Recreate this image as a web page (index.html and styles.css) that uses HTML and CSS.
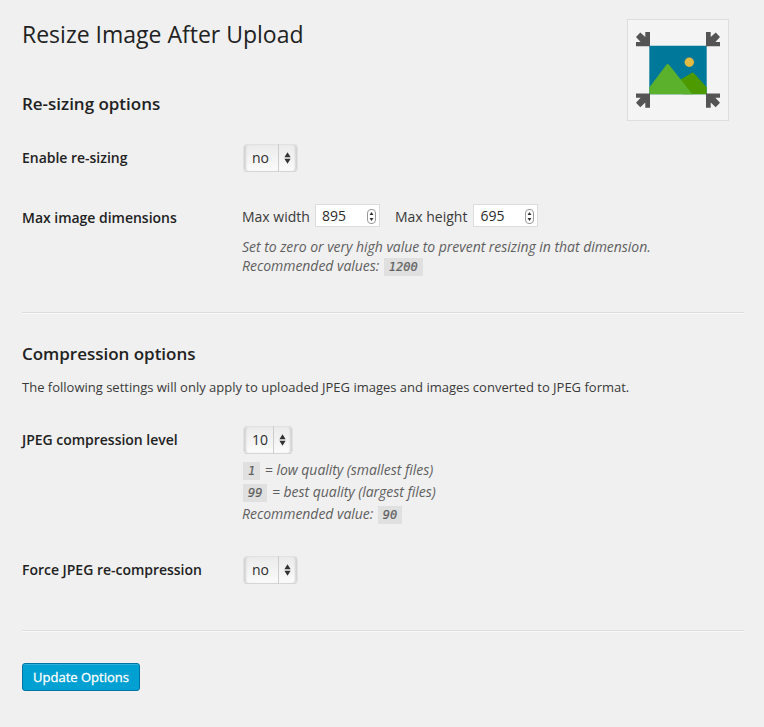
FILE: index.html
```
<!DOCTYPE html>
<html lang="en">
<head>
<meta charset="utf-8">
<title>Resize Image After Upload</title>
<link rel="stylesheet" href="styles.css">
</head>
<body>
<form class="wrap">
  <header class="top">
    <h1>Resize Image After Upload</h1>
    <div class="logo">
      <svg width="100" height="100" viewBox="0 0 100 100">
        <defs><path id="arrow" d="M22 12v14.3H8v-4.3h4.6L8 17l4.3-4.5 5 4.6V12z"/></defs>
        <path fill="#007899" d="M21.3 25.8h57.4v48.5H21.3z"/>
        <circle cx="61.3" cy="42.3" r="4.7" fill="#e3bb42"/>
        <path fill="#4c9a00" d="m50 61 14-8.3q1-.5 2 .5l12.7 14.1v7H55z"/>
        <path fill="#5bb02c" d="M21.3 67.5 38.6 44.6q1.1-1.3 2.2 0L64.5 74.3H21.3z"/>
        <g fill="#545454">
          <use href="#arrow"/>
          <use href="#arrow" transform="matrix(-1 0 0 1 100 0)"/>
          <use href="#arrow" transform="matrix(1 0 0 -1 0 99.7)"/>
          <use href="#arrow" transform="matrix(-1 0 0 -1 100 99.7)"/>
        </g>
      </svg>
    </div>
  </header>

  <h2>Re-sizing options</h2>
  <div class="row row-enable">
    <span class="label">Enable re-sizing</span>
    <div class="field">
      <span class="select"><span class="value">no</span><svg class="arrows" width="19" height="28" viewBox="0 0 19 28"><path d="M9 8l3.3 5.2H5.7zM9 20l3.3-5.2H5.7z"/></svg></span>
    </div>
  </div>
  <div class="row row-dims">
    <span class="label">Max image dimensions</span>
    <div class="field">
      <div class="dims">
        <span class="dim-name">Max width</span>
        <span class="number">895<svg width="9" height="15" viewBox="0 0 9 15"><rect x=".5" y=".5" width="8" height="14" rx="3.5"/><path d="M4.5 3 6.5 6h-4zM4.5 12l2-3h-4z"/></svg></span>
        <span class="dim-name">Max height</span>
        <span class="number last-number">695<svg width="9" height="15" viewBox="0 0 9 15"><rect x=".5" y=".5" width="8" height="14" rx="3.5"/><path d="M4.5 3 6.5 6h-4zM4.5 12l2-3h-4z"/></svg></span>
      </div>
      <p class="desc">Set to zero or very high value to prevent resizing in that dimension.<br>Recommended values: <code>1200</code></p>
    </div>
  </div>

  <hr class="rule">

  <h2 class="second">Compression options</h2>
  <p class="intro">The following settings will only apply to uploaded JPEG images and images converted to JPEG format.</p>
  <div class="row row-level">
    <span class="label">JPEG compression level</span>
    <div class="field">
      <span class="select"><span class="value">10</span><svg class="arrows" width="19" height="28" viewBox="0 0 19 28"><path d="M9 8l3.3 5.2H5.7zM9 20l3.3-5.2H5.7z"/></svg></span>
      <p class="desc levels"><code>1</code> = low quality (smallest files)<br><code>99</code> = best quality (largest files)<br>Recommended value: <code>90</code></p>
    </div>
  </div>
  <div class="row row-force">
    <span class="label">Force JPEG re-compression</span>
    <div class="field">
      <span class="select"><span class="value">no</span><svg class="arrows" width="19" height="28" viewBox="0 0 19 28"><path d="M9 8l3.3 5.2H5.7zM9 20l3.3-5.2H5.7z"/></svg></span>
    </div>
  </div>

  <hr class="rule last">
  <button class="submit" type="button">Update Options</button>
</form>
</body>
</html>
```
FILE: styles.css
```
* { box-sizing: border-box; }
body { margin: 0; background: #f0f0f0; color: #3a3a3a; font: 14px/20px "Open Sans", sans-serif; }
.wrap { padding: 19px 20px 0 22px; }

.top { display: flex; justify-content: space-between; height: 73px; padding-right: 15px; }
h1 { margin: 0; font-size: 23px; line-height: 30px; font-weight: 400; color: #222; }
.logo { flex: none; width: 102px; height: 102px; border: 1px solid #dedede; background: #f4f4f4; }
.logo svg { display: block; }

h2 { margin: 0; font-size: 17px; line-height: 24px; font-weight: 600; letter-spacing: -.02px; color: #222; }
.second { margin-top: 28px; }
.intro { margin: 11px 0 0; font-size: 13px; color: #3a3a3a; }

.row { display: flex; }
.label { width: 220px; flex: none; font-weight: 600; line-height: 28px; letter-spacing: -.02px; color: #222; }
.row-enable { margin-top: 28px; }
.row-dims { margin-top: 32px; height: 108px; }
.row-level { margin-top: 29px; }
.row-force { margin-top: 31px; }

.select {
  display: flex;
  width: fit-content;
  height: 28px;
  margin-left: 1px;
  border: 1px solid #e2e2e2;
  border-bottom-color: #d6d6d6;
  border-radius: 4px;
  background: linear-gradient(#ebebeb, #fbfbfb);
  box-shadow: inset 3px 0 2px -1px #d2d2d2, inset -3px 0 2px -1px #d2d2d2;
  color: #2e2e2e;
  line-height: 26px;
}
.value { padding: 0 8px; }
.value + .arrows { margin-top: -1px; border-left: 1px solid #cdcdcd; fill: #333; }
.row-enable .value, .row-force .value { width: 34px; }
.row-level .value { width: 29px; }

.dims { display: flex; align-items: center; height: 23px; }
.dim-name { position: relative; top: 1px; }
.number {
  display: flex;
  align-items: center;
  justify-content: space-between;
  width: 65px;
  height: 23px;
  margin: 0 15px 0 5px;
  padding: 0 3px 0 6px;
  border: 1px solid #ddd;
  background: #fff;
  color: #2c2c2c;
}
.last-number { margin: 0 0 0 6px; }
.number svg { margin-top: 2px; fill: #333; }
.number rect { fill: #fff; stroke: #999; }

.desc { margin: 10px 0 0; line-height: 19px; letter-spacing: -.035px; font-style: italic; color: #5f5f5f; }
.levels { margin-top: 5px; line-height: 22px; }
code {
  display: inline-block;
  height: 18px;
  margin: 0 1px;
  padding: 0 5px;
  background: #e0e0e0;
  font: italic 12px/18px "DejaVu Sans Mono", monospace;
  -webkit-text-stroke: .2px #5f5f5f;
  vertical-align: middle;
}

.rule { height: 2px; margin: 0; border: 0; border-top: 1px solid #dcdcdc; border-bottom: 1px solid #fafafa; }
.last { margin-top: 46px; }
.submit {
  display: block;
  width: 118px;
  height: 28px;
  margin-top: 31px;
  padding: 0;
  border: 1px solid #0074a2;
  border-radius: 3px;
  background: #00a0d2;
  box-shadow: inset 0 1px 0 rgba(120, 200, 230, .4);
  color: #fff;
  font: 500 13px/26px "Open Sans", sans-serif;
  -webkit-text-stroke: .3px #fff;
}
```
